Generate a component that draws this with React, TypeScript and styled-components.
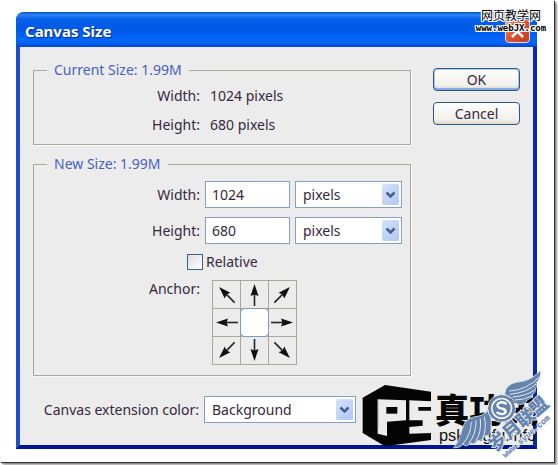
import React from 'react';
import styled, { createGlobalStyle } from 'styled-components';

const GlobalStyle = createGlobalStyle`
  * { box-sizing: border-box; }
  body {
    margin: 0;
    background: #fff;
    color: #35283c;
    font: 14px/18px 'Noto Sans', 'Open Sans', sans-serif;
  }
  button, input, select { font: inherit; color: inherit; margin: 0; }
`;

const Backdrop = styled.div`
  padding: 0 4px 4px 0;
  overflow: hidden;
`;

const Paper = styled.div`
  position: relative;
  padding: 12px 17px 13px 16px;
  background: #fff;
  box-shadow: 1px 1px 1px #333, 3px 3px 2px #999;
`;

const Dialog = styled.section`
  border: 4px solid #1c50c8;
  border-width: 0 4px 4px;
  border-right-color: #0828a8;
  border-bottom-color: #001690;
  border-radius: 8px 8px 0 0;
  background: #ececec;
`;

const TitleBar = styled.header`
  display: flex;
  align-items: center;
  justify-content: space-between;
  height: 35px;
  margin: 0 -4px;
  padding: 3px 7px 0 9px;
  border-radius: 8px 8px 0 0;
  background: linear-gradient(#0a4fc4 0, #2b83f5 3px, #0560ea 7px, #0058e6 18px, #0067fb 27px, #0064f4 31px, #0046c8 35px);
`;

const Title = styled.h1`
  margin: 0;
  color: #fff;
  font: bold 15px/20px 'Noto Sans', sans-serif;
  text-shadow: 1px 1px 1px #0a2a80;
`;

const CloseButton = styled.button`
  display: grid;
  place-items: center;
  width: 25px;
  height: 24px;
  padding: 0;
  border: 1px solid #f4d4d0;
  border-radius: 4px;
  background: linear-gradient(135deg, #ee9478, #dc5030 50%, #c03c1c);
`;

const Content = styled.div`
  display: flex;
  gap: 22px;
  padding: 16px 13px 22px 13px;
`;

const Settings = styled.form`
  flex: 1;
  display: flex;
  flex-direction: column;
`;

const Group = styled.fieldset<{ $gap: number; $bottom: number }>`
  display: flex;
  flex-direction: column;
  gap: ${p => p.$gap}px;
  min-width: 0;
  margin: 0 0 ${p => p.$bottom}px;
  padding: 10px 8px 10px 0;
  border: 1px solid #aaa79c;
  box-shadow: 1px 1px 0 #fafafa;
`;

const Legend = styled.legend`
  margin-left: 13px;
  padding: 0 7px;
  color: #4a5fbe;
  line-height: 14px;
`;

const Row = styled.div<{ $top?: boolean }>`
  display: grid;
  grid-template-columns: 166px 1fr;
  column-gap: 5px;
  align-items: ${p => (p.$top ? 'start' : 'center')};
`;

const Label = styled.label`
  text-align: right;
  white-space: nowrap;
`;

const Value = styled.output`
  padding-left: 5px;
`;

const Fields = styled.div`
  display: flex;
  gap: 5px;
`;

const TextInput = styled.input`
  width: 85px;
  height: 27px;
  padding: 0 6px;
  border: 1px solid #86a0bc;
  background: #fff;
`;

const SelectBox = styled.div<{ $width: number }>`
  position: relative;
  width: ${p => p.$width}px;
  height: 27px;
`;

const SelectControl = styled.select`
  width: 100%;
  height: 100%;
  padding: 0 24px 0 7px;
  border: 1px solid #86a0bc;
  border-radius: 0;
  background: #fff;
  appearance: none;
`;

const Arrow = styled.span`
  position: absolute;
  top: 3px;
  right: 3px;
  display: grid;
  place-items: center;
  width: 17px;
  height: 21px;
  border-radius: 2px;
  background: linear-gradient(135deg, #d4e2fc, #afc8f4);
  pointer-events: none;
`;

const CheckRow = styled.label`
  display: flex;
  align-items: center;
  gap: 3px;
  padding-left: 153px;
`;

const Checkbox = styled.input`
  width: 16px;
  height: 16px;
  border: 1px solid #35618c;
  background: linear-gradient(135deg, #dedede, #fff);
  appearance: none;
`;

const AnchorGrid = styled.div`
  display: grid;
  grid-template-columns: repeat(3, 27px);
  grid-auto-rows: 27px;
  gap: 1px;
  width: 85px;
  margin-left: 7px;
  padding: 1px;
  background: #a9a7a0;
`;

const AnchorCell = styled.button<{ $active: boolean }>`
  display: grid;
  place-items: center;
  padding: 0;
  border: 0;
  border-radius: ${p => (p.$active ? '3px' : '0')};
  outline: ${p => (p.$active ? '1px solid #7f9cbc' : 'none')};
  background: ${p => (p.$active ? '#fff' : '#ececec')};
`;

const Actions = styled.div`
  display: flex;
  flex-direction: column;
  gap: 11px;
  width: 88px;
  padding-top: 5px;
`;

const ActionButton = styled.button<{ $primary?: boolean }>`
  height: 23px;
  padding: 0;
  border: 1px solid #2f587f;
  border-radius: 4px;
  background: linear-gradient(#fff, #f1f0ea 80%, #dcd8cf);
  box-shadow: ${p => (p.$primary ? 'inset 0 -2px 1px #83a6e4, inset 0 0 0 1px #b6cdf4' : 'none')};
  line-height: 20px;
`;

const SiteMark = styled.div`
  position: absolute;
  top: 7px;
  right: 6px;
  width: 74px;
  color: #000;
  text-align: center;
  text-shadow: 1px 0 #fff, -1px 0 #fff, 0 1px #fff, 0 -1px #fff, 1px 1px #fff, -1px -1px #fff, 1px -1px #fff, -1px 1px #fff;
`;

const SiteName = styled.div`
  font: 12px/16px 'Noto Sans CJK SC', sans-serif;
`;

const SiteUrl = styled.div`
  font: bold 9px/10px 'DejaVu Sans Mono', monospace;
`;

const Brand = styled.svg`
  position: absolute;
  right: -4px;
  bottom: -4px;
  width: 208px;
  height: 95px;
  pointer-events: none;
`;

const Chevron = () => (
  <svg width="11" height="8" viewBox="0 0 11 8" fill="none">
    <path d="M1.5 1.5 5.5 5.5 9.5 1.5" stroke="#435f91" strokeWidth="2.5" />
  </svg>
);

function Select({ id, width, value, label }: { id: string; width: number; value: string; label?: string }) {
  return (
    <SelectBox $width={width}>
      <SelectControl id={id} aria-label={label} defaultValue={value}>
        <option>{value}</option>
      </SelectControl>
      <Arrow><Chevron /></Arrow>
    </SelectBox>
  );
}

const anchors: { name: string; angle: number | null }[] = [
  { name: 'Top left', angle: -45 }, { name: 'Top', angle: 0 }, { name: 'Top right', angle: 45 },
  { name: 'Left', angle: -90 }, { name: 'Center', angle: null }, { name: 'Right', angle: 90 },
  { name: 'Bottom left', angle: -135 }, { name: 'Bottom', angle: 180 }, { name: 'Bottom right', angle: 135 },
];

const Pointer = ({ angle }: { angle: number }) => (
  <svg width="27" height="27" viewBox="0 0 27 27">
    <g transform={`rotate(${angle} 13.5 13.5)`}>
      <path d="M13.5 12V25" stroke="#252525" strokeWidth="1.6" />
      <path d="M13.5 3 17.5 15 13.5 13.5 9.5 15Z" fill="#111" />
    </g>
  </svg>
);

const BrandMarks = () => (
  <Brand viewBox="0 0 624 285" aria-hidden="true">
    <path d="M38 80 105 42 243 62V207L105 226 38 186Z" fill="#050505" />
    <path d="M83 85 168 88V148L111 152V195L83 188Z" fill="#ececec" />
    <path d="M109 108H142V128H109Z" fill="#050505" />
    <path d="M178 88 244 91V108H205V119H244V186L178 188V168L218 164V148H178Z" fill="#ececec" />
    <path d="M84 92V172" stroke="#888" strokeWidth="2" />
    <text x="254" y="157" fontSize="104" fontWeight="900" fontFamily="'Noto Sans CJK SC', sans-serif" fill="#050505">真功夫</text>
    <text x="267" y="209" fontSize="49" fontFamily="'Liberation Sans', sans-serif" fill="#111">pskungfu.info</text>
    <g fill="#6584ad" stroke="#d9e2ed" strokeWidth="2.5">
      <path d="M464 74C465 46 482 35 511 32 536 29 556 15 572 -3 573 15 568 27 557 37 562 41 563 44 555 54 559 59 554 66 546 71 548 78 541 84 532 86 530 96 518 101 503 101 493 86 480 77 464 74Z" />
      <path d="M419 116C407 123 397 136 375 137 350 142 342 155 336 177 331 197 323 216 311 230 327 231 334 226 341 218 343 230 355 224 363 215 369 222 377 216 384 208 393 211 401 202 405 194 415 196 423 186 423 176L424 150Z" />
    </g>
    <g fill="none" stroke="#e2e8ef" strokeWidth="3">
      <path d="M478 60Q530 57 567 19" />
      <path d="M480 70Q531 65 560 38" />
      <path d="M488 78Q528 75 554 57" />
      <path d="M495 87Q522 87 544 75" />
      <path d="M364 153Q362 195 337 220" />
      <path d="M378 149Q378 193 356 217" />
      <path d="M391 143Q395 184 377 211" />
      <path d="M403 137Q411 174 398 201" />
    </g>
    <circle cx="455" cy="112" r="36" fill="#f3f5f8" stroke="#6584ad" strokeWidth="8" />
    <circle cx="455" cy="112" r="42" fill="none" stroke="#e1e8f0" strokeWidth="3" />
    <circle cx="455" cy="112" r="27" fill="#6584ad" />
    <path d="M470 99C453 87 434 99 446 109C454 115 467 112 467 121C467 131 449 132 440 123" fill="none" stroke="#fff" strokeWidth="7" />
    <g transform="rotate(-41 440 245)" fill="#6584ad" stroke="#edf1f5" strokeWidth="5" paintOrder="stroke" fontWeight="900">
      <text x="438" y="242" fontSize="54" fontFamily="'Noto Sans CJK SC', sans-serif">岁月联盟</text>
      <text x="449" y="274" fontSize="25" fontFamily="'Liberation Mono', monospace">www.syue.com</text>
    </g>
  </Brand>
);

export default function App() {
  return (
    <Backdrop>
      <GlobalStyle />
      <Paper>
        <Dialog aria-labelledby="title">
          <TitleBar>
            <Title id="title">Canvas Size</Title>
            <CloseButton aria-label="Close">
              <svg width="15" height="15" viewBox="0 0 15 15">
                <path d="M2 2 13 13M13 2 2 13" stroke="#fff" strokeWidth="2.5" />
              </svg>
            </CloseButton>
          </TitleBar>
          <Content>
            <Settings>
              <Group $gap={11} $bottom={12}>
                <Legend>Current Size: 1.99M</Legend>
                <Row><Label htmlFor="current-width">Width:</Label><Value id="current-width">1024 pixels</Value></Row>
                <Row><Label htmlFor="current-height">Height:</Label><Value id="current-height">680 pixels</Value></Row>
              </Group>
              <Group $gap={9} $bottom={20}>
                <Legend>New Size: 1.99M</Legend>
                <Row>
                  <Label htmlFor="width">Width:</Label>
                  <Fields>
                    <TextInput id="width" defaultValue="1024" />
                    <Select id="width-unit" label="Width unit" width={107} value="pixels" />
                  </Fields>
                </Row>
                <Row>
                  <Label htmlFor="height">Height:</Label>
                  <Fields>
                    <TextInput id="height" defaultValue="680" />
                    <Select id="height-unit" label="Height unit" width={107} value="pixels" />
                  </Fields>
                </Row>
                <CheckRow><Checkbox type="checkbox" />Relative</CheckRow>
                <Row $top>
                  <Label as="span" id="anchor">Anchor:</Label>
                  <AnchorGrid role="group" aria-labelledby="anchor">
                    {anchors.map(a => (
                      <AnchorCell key={a.name} type="button" aria-label={a.name} $active={a.angle === null}>
                        {a.angle !== null && <Pointer angle={a.angle} />}
                      </AnchorCell>
                    ))}
                  </AnchorGrid>
                </Row>
              </Group>
              <Row>
                <Label htmlFor="extension">Canvas extension color:</Label>
                <Select id="extension" width={152} value="Background" />
              </Row>
            </Settings>
            <Actions>
              <ActionButton $primary>OK</ActionButton>
              <ActionButton>Cancel</ActionButton>
            </Actions>
          </Content>
        </Dialog>
        <SiteMark>
          <SiteName>网页教学网</SiteName>
          <SiteUrl>www.webJX.com</SiteUrl>
        </SiteMark>
        <BrandMarks />
      </Paper>
    </Backdrop>
  );
}
